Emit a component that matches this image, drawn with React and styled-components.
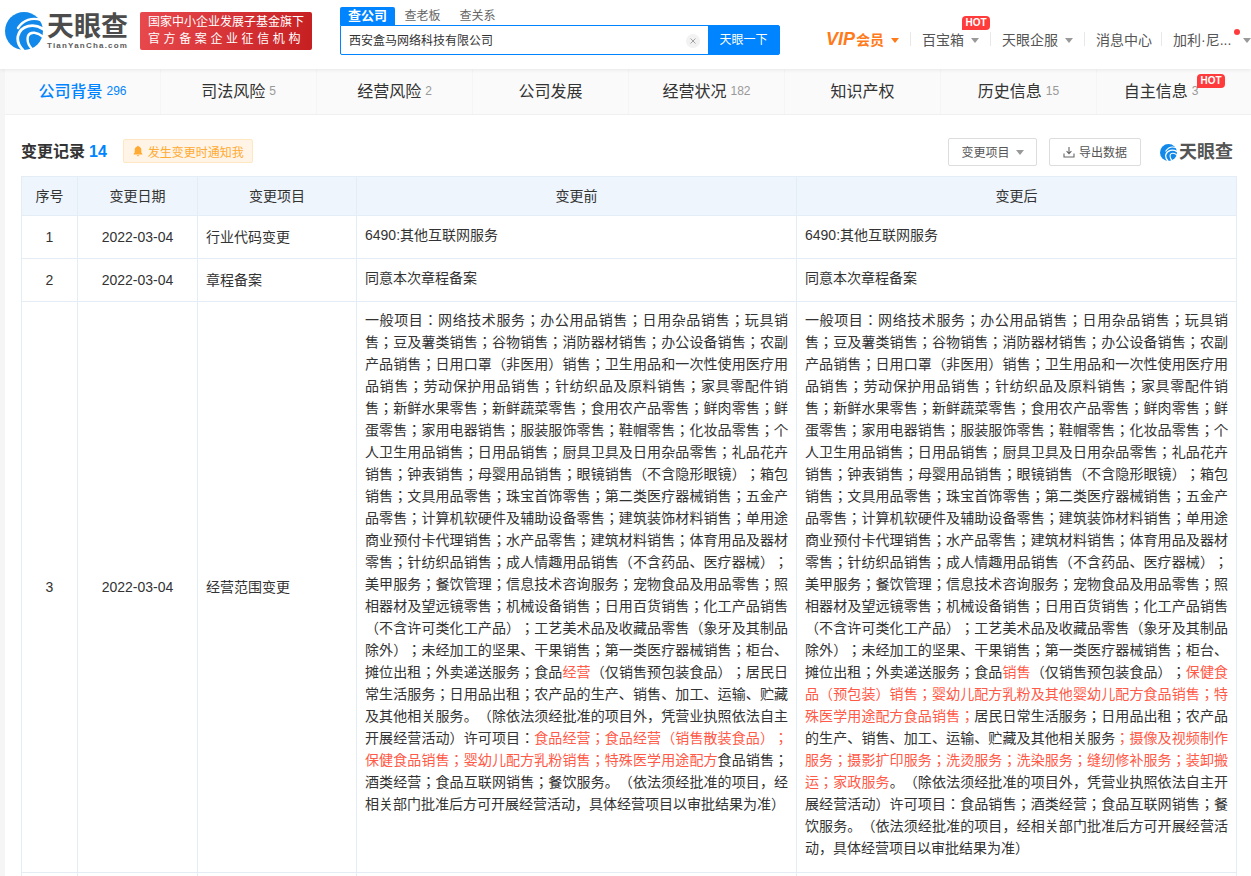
import React from 'react';
import styled, { createGlobalStyle } from 'styled-components';

const GlobalStyle = createGlobalStyle`
  html, body {
    margin: 0;
    padding: 0;
    height: 876px;
    overflow: hidden;
    background: #f5f5f5;
  }
  body {
    font-family: "Liberation Sans", "Noto Sans CJK SC", sans-serif;
    color: #333;
    text-spacing-trim: space-all;
  }
  * {
    box-sizing: border-box;
  }
`;

// Header
const Header = styled.header`
  height: 69px;
  background: #fff;
  box-shadow: 0 1px 4px rgba(0, 0, 0, 0.08);
  position: relative;
  z-index: 2;
  display: flex;
  align-items: flex-start;
  white-space: nowrap;
`;

const LogoWrap = styled.div`
  width: 140px;
  flex: none;
  padding: 12px 0 0 5px;
  display: flex;
  gap: 4px;
`;

const LogoText = styled.div`
  display: flex;
  flex-direction: column;
  padding-top: 2px;
`;

const LogoName = styled.div`
  font-size: 27px;
  line-height: 26px;
  font-weight: 700;
  color: #4c4c4c;
`;

const LogoSub = styled.div`
  font-size: 8px;
  line-height: 10px;
  margin-top: 1px;
  font-weight: 700;
  color: #5c5c5c;
  letter-spacing: 1.2px;
`;

const Banner = styled.div`
  flex: none;
  width: 172px;
  height: 38px;
  margin-top: 12px;
  border-radius: 2px;
  background: linear-gradient(100deg, #e8494d, #c61f22);
  color: #fff;
  padding-top: 2px;
  text-align: center;
  font-size: 12px;
  line-height: 17px;
`;

const BannerLine = styled.div`
  letter-spacing: ${props => props.spread || '0'};
`;

const Search = styled.div`
  flex: none;
  width: 440px;
  margin: 7px 0 0 28px;
`;

const SearchTabs = styled.div`
  height: 18px;
  display: flex;
  font-size: 12px;
  line-height: 18px;
  color: #666;
`;

const SearchTab = styled.div`
  width: 55px;
  text-align: center;
  ${props =>
    props.active &&
    `
    background: #0084ff;
    color: #fff;
    font-weight: 700;
    border-radius: 2px 2px 0 0;
    font-size: 13px;
  `};
`;

const SearchBox = styled.div`
  height: 30px;
  display: flex;
  border: 1px solid #0084ff;
  border-radius: 0 2px 2px 2px;
  background: #0084ff;
  overflow: hidden;
`;

const SearchInput = styled.div`
  flex: 1;
  background: #fff;
  padding: 1px 8px 0;
  font-size: 12px;
  line-height: 28px;
  color: #333;
  display: flex;
  align-items: center;
  justify-content: space-between;
`;

const ClearIcon = styled.span`
  width: 14px;
  height: 14px;
  border-radius: 50%;
  background: #f2f2f2;
  color: #999;
  display: flex;
  align-items: center;
  justify-content: center;
`;

const SearchButton = styled.div`
  width: 71px;
  flex: none;
  text-align: center;
  color: #fff;
  font-size: 12px;
  line-height: 28px;
`;

const Nav = styled.nav`
  flex: none;
  margin: 28px 0 0 46px;
  display: flex;
  align-items: center;
  height: 22px;
  font-size: 14px;
  color: #555;
`;

const NavItem = styled.div`
  position: relative;
  display: flex;
  align-items: center;
  height: 14px;
  padding: 0 ${props => (props.right === undefined ? 11 : props.right)}px 0 ${props => (props.left === undefined ? 11 : props.left)}px;
  border-left: ${props => (props.first ? 'none' : '1px solid #e8e8e8')};
`;

const VipLabel = styled.span`
  color: #ff7a1a;
  font-weight: 700;
`;

const VipMark = styled.span`
  font-style: italic;
  font-size: 18px;
  font-weight: 700;
  margin-right: 1px;
`;

const Caret = styled.i`
  display: inline-block;
  margin-left: ${props => (props.gap === undefined ? 7 : props.gap)}px;
  width: 0;
  height: 0;
  border-left: 4.5px solid transparent;
  border-right: 4.5px solid transparent;
  border-top: 5.5px solid ${props => props.color || '#999'};
  transform: translateY(1px);
`;

const HotBadge = styled.span`
  position: absolute;
  left: ${props => props.left}px;
  top: ${props => props.top}px;
  width: 28px;
  height: 14px;
  background: #ff3b3b;
  color: #fff;
  font-size: 10px;
  line-height: 14px;
  font-weight: 700;
  text-align: center;
  border-radius: 4px 4px 4px 0;
`;

const RedDot = styled.span`
  position: absolute;
  left: 72px;
  top: -3px;
  width: 6px;
  height: 6px;
  border-radius: 50%;
  background: #ff3b3b;
`;

// Tabs
const Page = styled.main`
  margin-left: 5px;
  height: 807px;
  background: #fff;
  overflow: hidden;
`;

const TabBar = styled.div`
  height: 46px;
  display: grid;
  grid-template-columns: repeat(7, 156px) 1fr;
  background: #fafafa;
  border-bottom: 1px solid #f0f0f0;
`;

const TabItem = styled.div`
  position: relative;
  display: flex;
  align-items: center;
  justify-content: center;
  gap: 4px;
  font-size: 16px;
  color: ${props => (props.active ? '#0084ff' : '#333')};
  font-weight: ${props => (props.active ? 500 : 400)};
  border-right: ${props => (props.last ? 'none' : '1px solid #f5f5f5')};
  padding: 0 ${props => (props.last ? 26 : 0)}px 3px 0;
`;

const TabCount = styled.span`
  font-size: 12px;
  font-weight: 400;
  color: ${props => (props.active ? '#0084ff' : '#999')};
  padding-top: 2px;
`;

// Section title
const SectionHead = styled.div`
  display: flex;
  align-items: center;
  height: 61px;
  padding: 11px 18px 0 16px;
`;

const SectionTitle = styled.h2`
  margin: 2px 0 0;
  font-size: 16px;
  line-height: 22px;
  font-weight: 700;
  color: #333;
`;

const SectionCount = styled.span`
  color: #0084ff;
  margin-left: 4px;
`;

const NotifyButton = styled.div`
  margin-left: 16px;
  width: 130px;
  height: 24px;
  display: flex;
  align-items: center;
  justify-content: center;
  gap: 4px;
  background: #fff4e5;
  border: 1px solid #ffe7c4;
  border-radius: 2px;
  color: #ffaa33;
  font-size: 12px;
`;

const HeadActions = styled.div`
  margin: 2px 0 0 auto;
  display: flex;
  align-items: center;
`;

const GhostButton = styled.div`
  width: ${props => props.width}px;
  height: 28px;
  margin-right: ${props => props.gap || 0}px;
  padding-bottom: 1px;
  display: flex;
  align-items: center;
  justify-content: center;
  gap: 4px;
  background: #fff;
  border: 1px solid #ddd;
  border-radius: 2px;
  color: #555;
  font-size: 12px;
`;

const SmallLogo = styled.div`
  display: flex;
  align-items: center;
  gap: 2px;
  font-size: 18px;
  line-height: 20px;
  font-weight: 700;
  color: #555;
`;

// Table
const TableWrap = styled.div`
  padding: 0 14px 0 16px;
`;

const Table = styled.table`
  width: 1215px;
  table-layout: fixed;
  border-collapse: collapse;
  font-size: 14px;
  color: #333;
`;

const HeadCell = styled.th`
  height: 39px;
  padding: 0 0 2px;
  background: #eef5fd;
  border: 1px solid #e4edf6;
  font-weight: 400;
  font-size: 14px;
  text-align: center;
`;

const Cell = styled.td`
  padding: 0 8px;
  border: 1px solid #e4edf6;
  line-height: 22px;
  text-align: ${props => props.align || 'left'};
`;

const TextCell = styled(Cell)`
  padding: ${props => (props.long ? '7px 8px 13px' : '8px 8px 12px')};
  font-family: "Liberation Sans", "Noto Sans CJK JP", sans-serif;
  text-align: justify;
  vertical-align: top;
`;

const Changed = styled.span`
  color: #ff5a48;
`;

function LogoMark({ size }) {
  return (
    <svg width={size} height={size} viewBox="0 0 38 38" style={{ flex: 'none' }}>
      <circle cx="19" cy="19" r="19" fill="#1289ea" />
      <g fill="none" stroke="#fff" strokeLinecap="round">
        <path d="M36 8C27 5 18 8 13 16" strokeWidth="2.400" />
        <path d="M38 17C29 11 16 13 13 24c-1 5 1 10 5 14" strokeWidth="2.800" />
        <path d="M38 25c-5-5-13-6-15-1-1 4 0 9 4 13" strokeWidth="2.400" />
      </g>
    </svg>
  );
}

function Bell() {
  return (
    <svg width="12" height="12" viewBox="0 0 12 12">
      <path d="M6 .8c-.5 0-.8.3-.8.8C3.600 2 2.700 3.300 2.700 5v2.600L1.600 9v.4h8.800V9L9.300 7.600V5c0-1.700-.9-3-2.500-3.400 0-.5-.3-.8-.8-.8zM4.800 10.200c.1.600.6 1 1.200 1s1.100-.4 1.200-1z" fill="#ffaa33" />
    </svg>
  );
}

function Download() {
  return (
    <svg width="12" height="12" viewBox="0 0 12 12" fill="none" stroke="#666" strokeWidth="1.100">
      <path d="M6 1v6.500M3.600 5.200 6 7.600l2.400-2.400M1 7.500V11h10V7.500" />
    </svg>
  );
}

const tabs = [
  { name: '公司背景', count: 296, active: true },
  { name: '司法风险', count: 5 },
  { name: '经营风险', count: 2 },
  { name: '公司发展' },
  { name: '经营状况', count: 182 },
  { name: '知识产权' },
  { name: '历史信息', count: 15 },
  { name: '自主信息', count: 3, hot: true },
];

const scopeStart = '一般项目：网络技术服务；办公用品销售；日用杂品销售；玩具销售；豆及薯类销售；谷物销售；消防器材销售；办公设备销售；农副产品销售；日用口罩（非医用）销售；卫生用品和一次性使用医疗用品销售；劳动保护用品销售；针纺织品及原料销售；家具零配件销售；新鲜水果零售；新鲜蔬菜零售；食用农产品零售；鲜肉零售；鲜蛋零售；家用电器销售；服装服饰零售；鞋帽零售；化妆品零售；个人卫生用品销售；日用品销售；厨具卫具及日用杂品零售；礼品花卉销售；钟表销售；母婴用品销售；眼镜销售（不含隐形眼镜）；箱包销售；文具用品零售；珠宝首饰零售；第二类医疗器械销售；五金产品零售；计算机软硬件及辅助设备零售；建筑装饰材料销售；单用途商业预付卡代理销售；水产品零售；建筑材料销售；体育用品及器材零售；针纺织品销售；成人情趣用品销售（不含药品、医疗器械）；美甲服务；餐饮管理；信息技术咨询服务；宠物食品及用品零售；照相器材及望远镜零售；机械设备销售；日用百货销售；化工产品销售（不含许可类化工产品）；工艺美术品及收藏品零售（象牙及其制品除外）；未经加工的坚果、干果销售；第一类医疗器械销售；柜台、摊位出租；外卖递送服务；食品';

function App() {
  return (
    <>
      <GlobalStyle />
      <Header>
        <LogoWrap>
          <LogoMark size={38} />
          <LogoText>
            <LogoName>天眼查</LogoName>
            <LogoSub>TianYanCha.com</LogoSub>
          </LogoText>
        </LogoWrap>
        <Banner>
          <BannerLine>国家中小企业发展子基金旗下</BannerLine>
          <BannerLine spread="3.600px">官方备案企业征信机构</BannerLine>
        </Banner>
        <Search>
          <SearchTabs>
            <SearchTab active>查公司</SearchTab>
            <SearchTab>查老板</SearchTab>
            <SearchTab>查关系</SearchTab>
          </SearchTabs>
          <SearchBox>
            <SearchInput>
              西安盒马网络科技有限公司
              <ClearIcon>
                <svg width="6" height="6" viewBox="0 0 6 6" stroke="#999" strokeWidth="0.900">
                  <path d="M.5.500l5 5M5.500.500l-5 5" />
                </svg>
              </ClearIcon>
            </SearchInput>
            <SearchButton>天眼一下</SearchButton>
          </SearchBox>
        </Search>
        <Nav>
          <NavItem first left={0}>
            <VipLabel>
              <VipMark>VIP</VipMark>会员
            </VipLabel>
            <Caret color="#ff7a1a" />
          </NavItem>
          <NavItem>
            百宝箱
            <Caret />
            <HotBadge left={51} top={-16}>HOT</HotBadge>
          </NavItem>
          <NavItem>
            天眼企服
            <Caret />
          </NavItem>
          <NavItem right={9}>消息中心</NavItem>
          <NavItem right={0}>
            <span>加利·尼...</span>
            <RedDot />
            <Caret gap={12} />
          </NavItem>
        </Nav>
      </Header>
      <Page>
        <TabBar>
          {tabs.map(tab => (
            <TabItem key={tab.name} active={tab.active} last={tab.hot}>
              {tab.name}
              {tab.count && <TabCount active={tab.active}>{tab.count}</TabCount>}
              {tab.hot && <HotBadge left={100} top={5}>HOT</HotBadge>}
            </TabItem>
          ))}
        </TabBar>
        <SectionHead>
          <SectionTitle>
            变更记录<SectionCount>14</SectionCount>
          </SectionTitle>
          <NotifyButton>
            <Bell />
            发生变更时通知我
          </NotifyButton>
          <HeadActions>
            <GhostButton width={89} gap={12}>
              变更项目
              <Caret gap={2} />
            </GhostButton>
            <GhostButton width={92} gap={19}>
              <Download />
              导出数据
            </GhostButton>
            <SmallLogo>
              <LogoMark size={17} />
              天眼查
            </SmallLogo>
          </HeadActions>
        </SectionHead>
        <TableWrap>
          <Table>
            <colgroup>
              <col width="56" />
              <col width="120" />
              <col width="159" />
              <col width="440" />
              <col width="440" />
            </colgroup>
            <thead>
              <tr>
                <HeadCell>序号</HeadCell>
                <HeadCell>变更日期</HeadCell>
                <HeadCell>变更项目</HeadCell>
                <HeadCell>变更前</HeadCell>
                <HeadCell>变更后</HeadCell>
              </tr>
            </thead>
            <tbody>
              <tr>
                <Cell align="center">1</Cell>
                <Cell align="center">2022-03-04</Cell>
                <Cell>行业代码变更</Cell>
                <TextCell>6490:其他互联网服务</TextCell>
                <TextCell>6490:其他互联网服务</TextCell>
              </tr>
              <tr>
                <Cell align="center">2</Cell>
                <Cell align="center">2022-03-04</Cell>
                <Cell>章程备案</Cell>
                <TextCell>同意本次章程备案</TextCell>
                <TextCell>同意本次章程备案</TextCell>
              </tr>
              <tr>
                <Cell align="center">3</Cell>
                <Cell align="center">2022-03-04</Cell>
                <Cell>经营范围变更</Cell>
                <TextCell long>
                  {scopeStart}
                  <Changed>经营</Changed>
                  （仅销售预包装食品）；居民日常生活服务；日用品出租；农产品的生产、销售、加工、运输、贮藏及其他相关服务。（除依法须经批准的项目外，凭营业执照依法自主开展经营活动）许可项目：
                  <Changed>食品经营；食品经营（销售散装食品）；保健食品销售；婴幼儿配方乳粉销售；特殊医学用途配方</Changed>
                  食品销售；酒类经营；食品互联网销售；餐饮服务。（依法须经批准的项目，经相关部门批准后方可开展经营活动，具体经营项目以审批结果为准）
                </TextCell>
                <TextCell long>
                  {scopeStart}
                  <Changed>销售</Changed>
                  （仅销售预包装食品）；
                  <Changed>保健食品（预包装）销售；婴幼儿配方乳粉及其他婴幼儿配方食品销售；特殊医学用途配方食品销售；</Changed>
                  居民日常生活服务；日用品出租；农产品的生产、销售、加工、运输、贮藏及其他相关服务
                  <Changed>；摄像及视频制作服务；摄影扩印服务；洗烫服务；洗染服务；缝纫修补服务；装卸搬运；家政服务</Changed>
                  。（除依法须经批准的项目外，凭营业执照依法自主开展经营活动）许可项目：食品销售；酒类经营；食品互联网销售；餐饮服务。（依法须经批准的项目，经相关部门批准后方可开展经营活动，具体经营项目以审批结果为准）
                </TextCell>
              </tr>
              <tr>
                <Cell align="center">&nbsp;</Cell>
                <Cell />
                <Cell />
                <TextCell />
                <TextCell />
              </tr>
            </tbody>
          </Table>
        </TableWrap>
      </Page>
    </>
  );
}

export default App;
